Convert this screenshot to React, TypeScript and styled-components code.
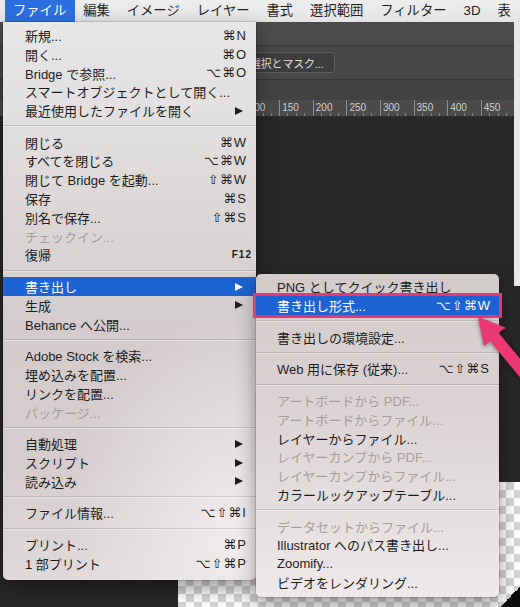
import React from 'react';
import styled, { createGlobalStyle } from 'styled-components';

type Entry = {
  label: string;
  keys?: string;
  fkey?: boolean;
  sub?: boolean;
  off?: boolean;
  on?: boolean;
  marked?: boolean;
};

const SANS = `"Liberation Sans", "Noto Sans CJK JP", "DejaVu Sans", sans-serif`;
const KEYS = `"Liberation Sans", "DejaVu Sans", sans-serif`;

const barItems = ['ファイル', '編集', 'イメージ', 'レイヤー', '書式', '選択範囲', 'フィルター', '3D', '表'];

const fileMenu: Entry[][] = [
  [
    { label: '新規...', keys: '⌘N' },
    { label: '開く...', keys: '⌘O' },
    { label: 'Bridge で参照...', keys: '⌥⌘O' },
    { label: 'スマートオブジェクトとして開く...' },
    { label: '最近使用したファイルを開く', sub: true },
  ],
  [
    { label: '閉じる', keys: '⌘W' },
    { label: 'すべてを閉じる', keys: '⌥⌘W' },
    { label: '閉じて Bridge を起動...', keys: '⇧⌘W' },
    { label: '保存', keys: '⌘S' },
    { label: '別名で保存...', keys: '⇧⌘S' },
    { label: 'チェックイン...', off: true },
    { label: '復帰', keys: 'F12', fkey: true },
  ],
  [
    { label: '書き出し', sub: true, on: true },
    { label: '生成', sub: true },
    { label: 'Behance へ公開...' },
  ],
  [
    { label: 'Adobe Stock を検索...' },
    { label: '埋め込みを配置...' },
    { label: 'リンクを配置...' },
    { label: 'パッケージ...', off: true },
  ],
  [
    { label: '自動処理', sub: true },
    { label: 'スクリプト', sub: true },
    { label: '読み込み', sub: true },
  ],
  [{ label: 'ファイル情報...', keys: '⌥⇧⌘I' }],
  [
    { label: 'プリント...', keys: '⌘P' },
    { label: '1 部プリント', keys: '⌥⇧⌘P' },
  ],
];

const exportMenu: Entry[][] = [
  [
    { label: 'PNG としてクイック書き出し' },
    { label: '書き出し形式...', keys: '⌥⇧⌘W', on: true, marked: true },
  ],
  [{ label: '書き出しの環境設定...' }],
  [{ label: 'Web 用に保存 (従来)...', keys: '⌥⇧⌘S' }],
  [
    { label: 'アートボードから PDF...', off: true },
    { label: 'アートボードからファイル...', off: true },
    { label: 'レイヤーからファイル...' },
    { label: 'レイヤーカンプから PDF...', off: true },
    { label: 'レイヤーカンプからファイル...', off: true },
    { label: 'カラールックアップテーブル...' },
  ],
  [
    { label: 'データセットからファイル...', off: true },
    { label: 'Illustrator へのパス書き出し...' },
    { label: 'Zoomify...' },
    { label: 'ビデオをレンダリング...' },
  ],
];

const rulerMarks = [100, 150, 200, 250, 300, 350, 400, 450];

const MenuList = ({ sections, indent }: { sections: Entry[][]; indent: number }) => (
  <>
    {sections.map((section, i) => (
      <React.Fragment key={i}>
        {i > 0 && <Separator />}
        {section.map((item) => (
          <Row
            key={item.label}
            $indent={indent}
            $on={item.on}
            $off={item.off}
            $marked={item.marked}
          >
            {item.label}
            {item.keys && <Keys $fkey={item.fkey}>{item.keys}</Keys>}
            {item.sub && <SubArrow />}
          </Row>
        ))}
      </React.Fragment>
    ))}
  </>
);

const PointerArrow = () => (
  <ArrowSvg width="50" height="80" viewBox="0 0 50 80">
    <path
      d="M9 13 L34.5 23 Q29.5 25 28.2 28.4 L66.2 74.7 L58.2 81.2 L20.2 34.9 Q17 37.5 14.4 40 Z"
      fill="#ec3872"
      stroke="#ec3872"
      strokeWidth="1.5"
      strokeLinejoin="round"
    />
  </ArrowSvg>
);

export default function App() {
  return (
    <>
      <GlobalStyle />
      <Screen>
        <MenuBar>
          {barItems.map((name, i) => (
            <BarItem key={name} $open={i === 0}>
              {name}
            </BarItem>
          ))}
        </MenuBar>
        <Workspace>
          <Upper>
            <UpperMain>
              <TabBar />
              <OptionsBar>
                <MaskButton>選択とマスク...</MaskButton>
              </OptionsBar>
              <InfoBar />
              <Ruler>
                {rulerMarks.map((n) => (
                  <RulerCell key={n}>{n}</RulerCell>
                ))}
              </Ruler>
              <DarkFill />
            </UpperMain>
            <EdgeStrip />
          </Upper>
          <Lower>
            <Doc />
          </Lower>
        </Workspace>

        <FilePanel>
          <MenuList sections={fileMenu} indent={22} />
        </FilePanel>
        <ExportPanel>
          <MenuList sections={exportMenu} indent={21} />
        </ExportPanel>
        <PointerArrow />
      </Screen>
    </>
  );
}

const GlobalStyle = createGlobalStyle`
  html, body {
    margin: 0;
    padding: 0;
    background: #282828;
    overflow: hidden;
  }
  #root {
    width: 520px;
    height: 607px;
  }
`;

const Screen = styled.div`
  position: relative;
  width: 520px;
  height: 607px;
  display: flex;
  flex-direction: column;
  overflow: hidden;
  font-family: ${SANS};
`;

const MenuBar = styled.div`
  display: flex;
  height: 22px;
  padding-left: 4.5px;
  background: linear-gradient(#eeeeee, #e4e4e4);
  flex-shrink: 0;
`;

const BarItem = styled.div<{ $open?: boolean }>`
  padding: 0 8.5px;
  line-height: 22px;
  font-size: 13.3px;
  white-space: nowrap;
  color: ${(p) => (p.$open ? '#ffffff' : '#1f1f1f')};
  background: ${(p) => (p.$open ? '#2c6fe0' : 'transparent')};
`;

const Workspace = styled.div`
  flex: 1;
  display: flex;
  flex-direction: column;
`;

const Upper = styled.div`
  display: flex;
  height: 264px;
`;

const UpperMain = styled.div`
  flex: 1;
  display: flex;
  flex-direction: column;
  overflow: hidden;
`;

const EdgeStrip = styled.div`
  width: 6px;
  background: #e9e9e9;
`;

const TabBar = styled.div`
  height: 23px;
  background: #4b4b4b;
  border-bottom: 1px solid #363636;
`;

const OptionsBar = styled.div`
  display: flex;
  align-items: center;
  height: 33px;
  padding-left: 239px;
  background: #474747;
  border-bottom: 1px solid #363636;
`;

const MaskButton = styled.div`
  height: 19px;
  padding: 0 10px;
  display: flex;
  align-items: center;
  font-size: 10.8px;
  color: #e2e2e2;
  background: #3d3d3d;
  border: 1px solid #5d5d5d;
  border-radius: 4px;
  white-space: nowrap;
`;

const InfoBar = styled.div`
  height: 20px;
  background: #424242;
`;

const Ruler = styled.div`
  display: flex;
  height: 16px;
  padding-left: 245.6px;
  background: #4a4a4a;
  flex-shrink: 0;
`;

const RulerCell = styled.div`
  flex: 0 0 33.6px;
  box-sizing: border-box;
  border-left: 1px solid #8e8e8e;
  padding-left: 2px;
  font-family: "Liberation Sans", sans-serif;
  font-size: 10px;
  line-height: 15px;
  color: #cfcfcf;
  background-image: repeating-linear-gradient(
    90deg,
    transparent 0 7.4px,
    #8a8a8a 7.4px 8.4px
  );
  background-size: 100% 3px;
  background-position: bottom left;
  background-repeat: no-repeat;
`;

const DarkFill = styled.div`
  flex: 1;
  background: #282828;
`;

const Lower = styled.div`
  flex: 1;
  display: flex;
  padding: 196px 0 0 178px;
  background: #282828;
`;

const Doc = styled.div`
  flex: 1;
  background-color: #ffffff;
  background-image: linear-gradient(to bottom right, transparent 50%, #0e0e0e 50%),
    linear-gradient(45deg, #d4d4d4 25%, transparent 25%, transparent 75%, #d4d4d4 75%),
    linear-gradient(45deg, #d4d4d4 25%, transparent 25%, transparent 75%, #d4d4d4 75%);
  background-size: 20px 20px, 16px 16px, 16px 16px;
  background-position: right bottom, 0 0, 8px 8px;
  background-repeat: no-repeat, repeat, repeat;
`;

const MenuPanel = styled.div`
  position: absolute;
  box-sizing: border-box;
  padding: 4px 0 5px;
  box-shadow: 0 8px 20px rgba(0, 0, 0, 0.4), 0 0 0 0.5px rgba(0, 0, 0, 0.25);
  z-index: 2;
`;

const FilePanel = styled(MenuPanel)`
  left: 3px;
  top: 22px;
  width: 253px;
  padding-bottom: 7px;
  border-radius: 0 0 5px 5px;
  background: radial-gradient(ellipse 70% 40% at 95% 92%, rgba(245, 240, 240, 0.9), transparent),
    linear-gradient(180deg, #e7e7e7 0%, #ddd9d9 30%, #d4cccc 55%, #d6cece 80%, #e0d9d9 100%);
`;

const ExportPanel = styled(MenuPanel)`
  left: 256px;
  top: 273.5px;
  width: 243px;
  border-radius: 5px;
  z-index: 3;
  background: linear-gradient(180deg, #d3caca 0%, #dbd3d3 40%, #e6dfdf 75%, #efe9e9 100%);
`;

const Separator = styled.div`
  height: 12.8px;
  display: flex;
  align-items: center;
  &::after {
    content: '';
    flex: 1;
    height: 2px;
    background: linear-gradient(rgba(0, 0, 0, 0.13) 50%, rgba(255, 255, 255, 0.35) 50%);
  }
`;

const Row = styled.div<{ $indent: number; $on?: boolean; $off?: boolean; $marked?: boolean }>`
  position: relative;
  display: flex;
  align-items: center;
  height: 18.8px;
  padding: 0 9px 0 ${(p) => p.$indent}px;
  font-size: 13px;
  white-space: nowrap;
  color: ${(p) => (p.$on ? '#ffffff' : p.$off ? '#a39c9c' : '#1c1c1c')};
  background: ${(p) => (p.$on ? '#1d63d3' : 'transparent')};
  ${(p) =>
    p.$marked &&
    `
    padding-right: 8px;
    outline: 3px solid #ea3571;
    z-index: 1;
  `}
`;

const Keys = styled.span<{ $fkey?: boolean }>`
  margin-left: auto;
  font-family: ${KEYS};
  font-size: ${(p) => (p.$fkey ? '10px' : '13px')};
  font-weight: ${(p) => (p.$fkey ? 'bold' : 'normal')};
  margin-right: ${(p) => (p.$fkey ? '-5px' : '0')};
  letter-spacing: 1px;
`;

const SubArrow = styled.span`
  margin-left: auto;
  margin-right: 4px;
  width: 0;
  height: 0;
  border-left: 8px solid currentColor;
  border-top: 4.5px solid transparent;
  border-bottom: 4.5px solid transparent;
`;

const ArrowSvg = styled.svg`
  position: absolute;
  left: 470px;
  top: 305px;
  z-index: 4;
  overflow: visible;
  filter: drop-shadow(0 1px 2px rgba(0, 0, 0, 0.45));
`;
